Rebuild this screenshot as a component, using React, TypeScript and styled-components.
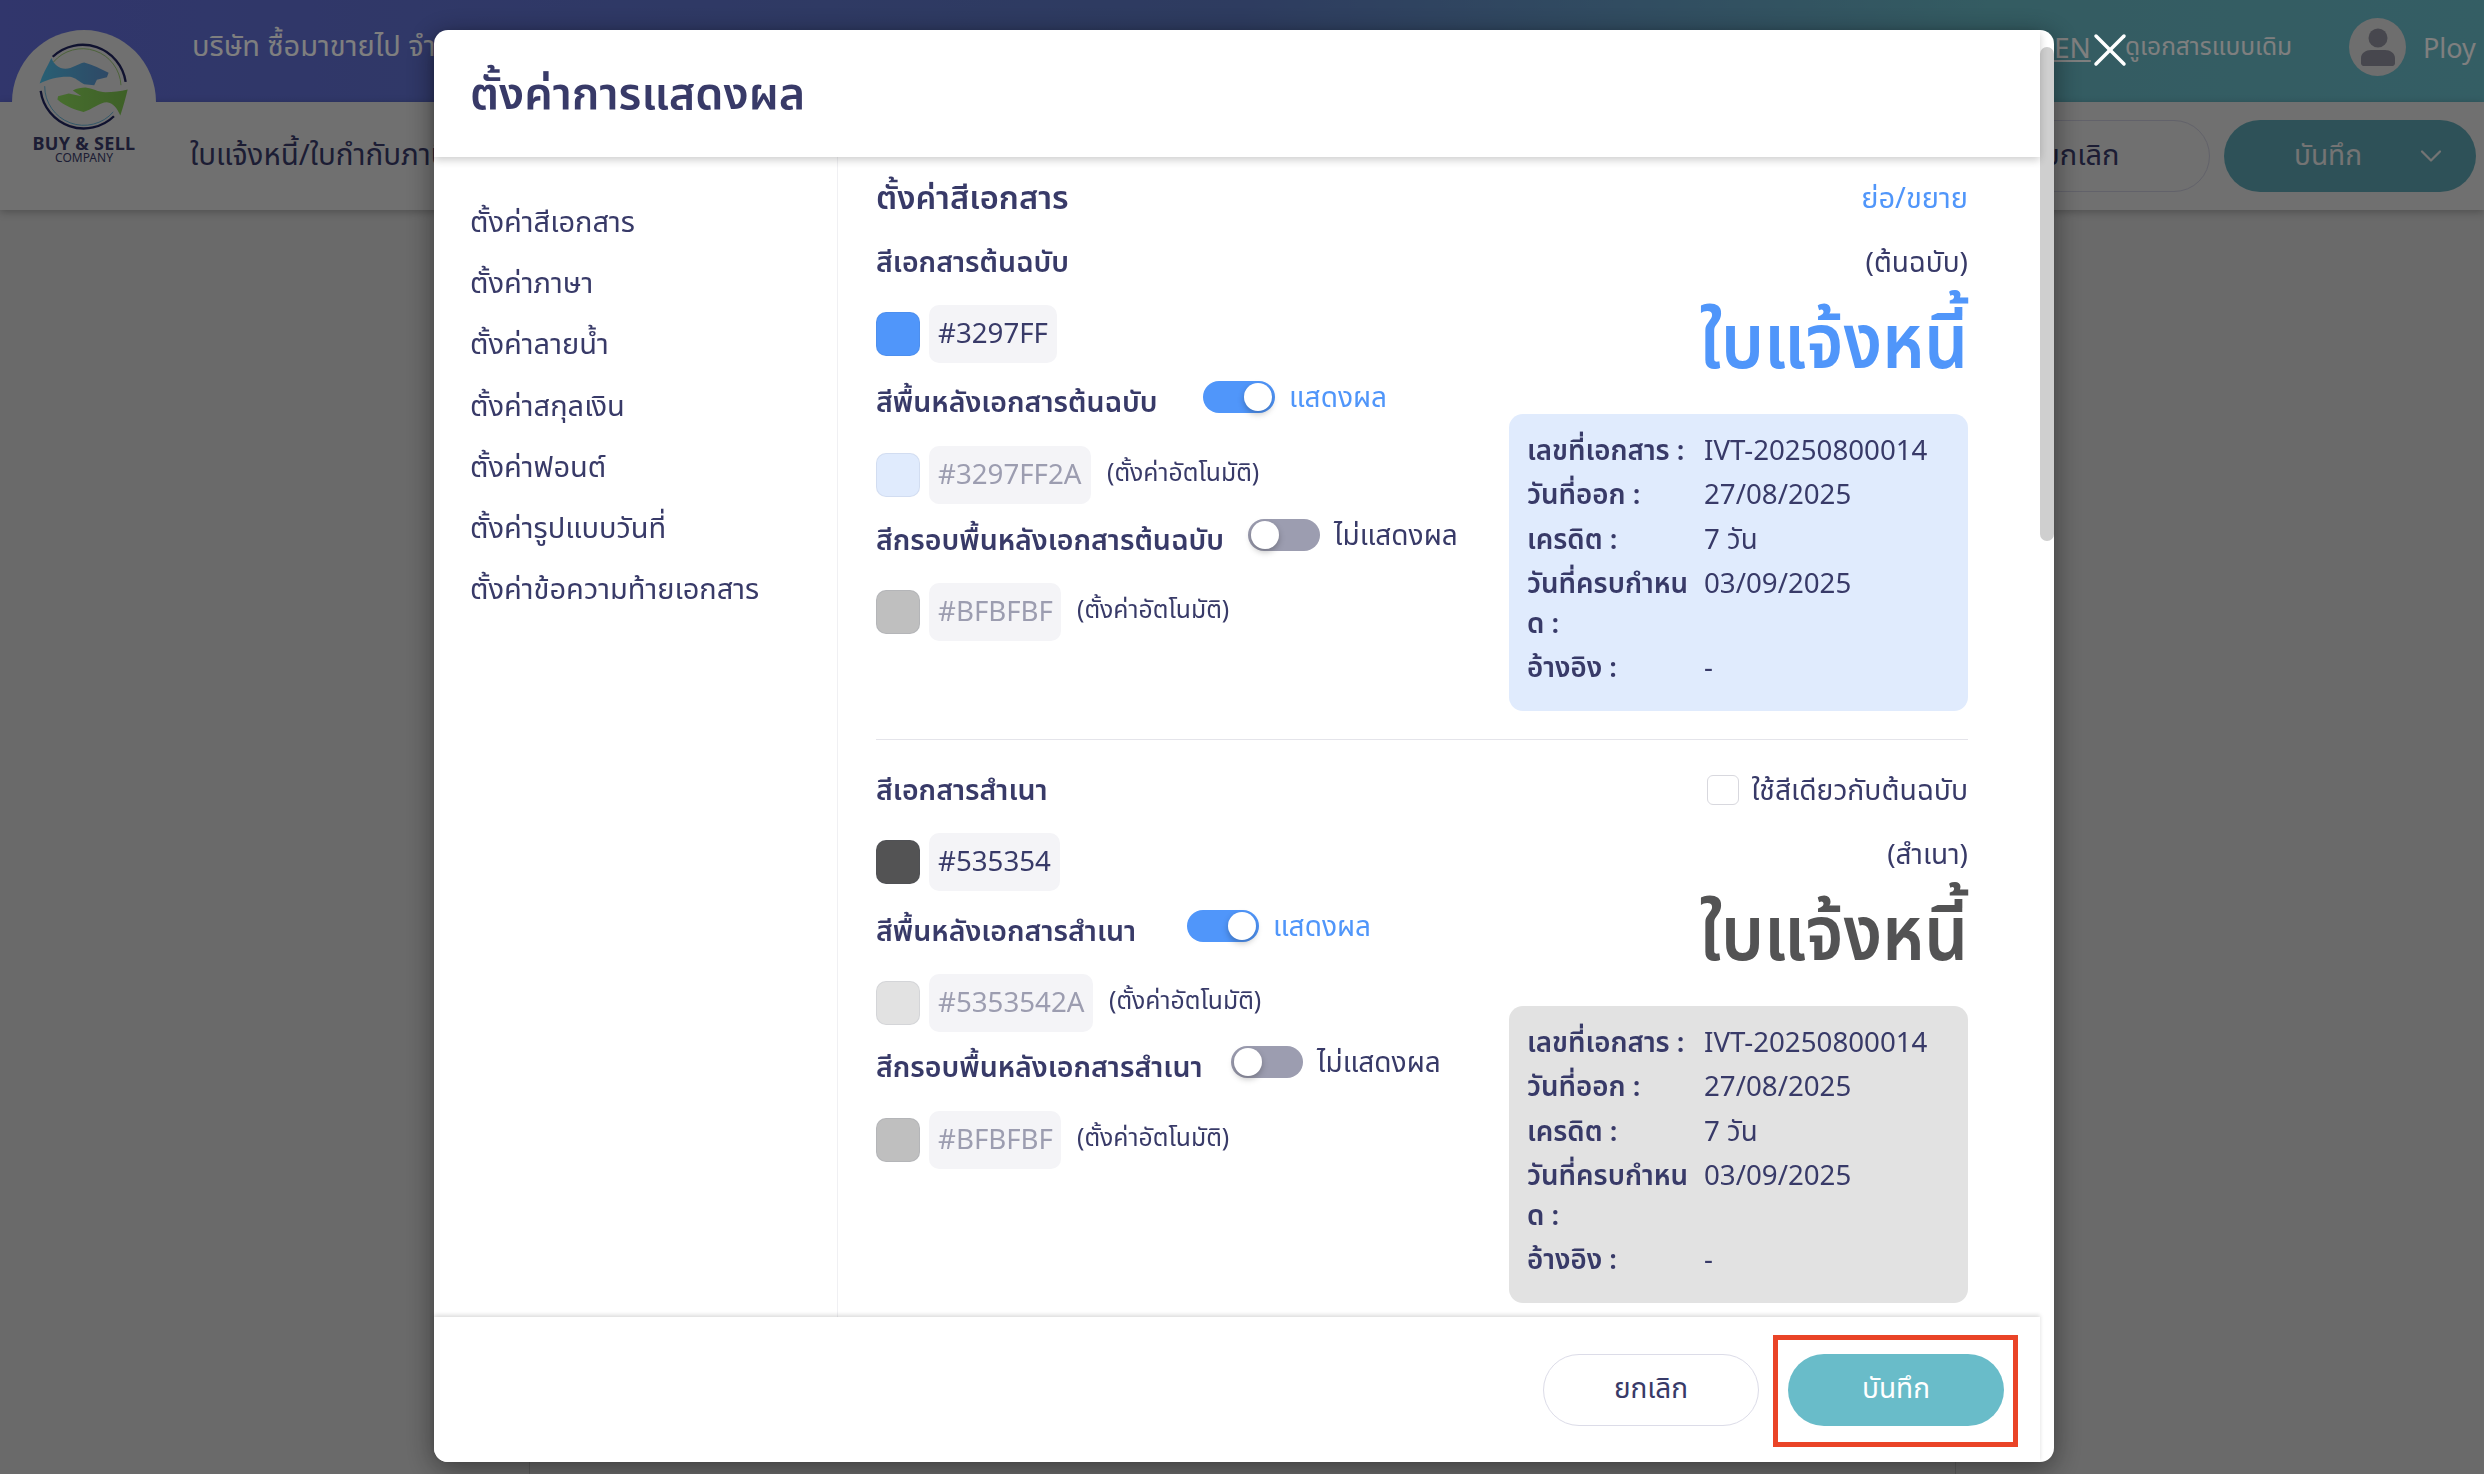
import React from "react";
import styled, { createGlobalStyle } from "styled-components";
import { ChevronDown, X } from "lucide-react";

const Global = createGlobalStyle`
  html, body { margin: 0; padding: 0; height: 100%; overflow: hidden; background: #d4d4d4; }
  * { box-sizing: border-box; }
  body, button, input { font-family: "Noto Sans", "Noto Sans Thai", "Open Sans", sans-serif; color: #383a68; }
`;

const Page = styled.div`position: relative; height: 1474px; overflow: hidden;`;
const TopBar = styled.header`
  height: 102px; padding: 0 9px 8px 192px; display: flex; align-items: center; justify-content: space-between;
  background: linear-gradient(90deg, #626cd8 0%, #5c78c0 50%, #68b8c4 80%, #69bcc9 100%);
`;
const Company = styled.div`font-size: 29px; color: #ffffff;`;
const TopRight = styled.div`display: flex; align-items: center;`;
const Lang = styled.span`font-size: 28px; color: #fff; text-decoration: underline; width: 71px;`;
const OldView = styled.span`font-size: 24.5px; color: #fff; width: 224px; white-space: nowrap;`;
const Avatar = styled.span`width: 57px; height: 58px; border-radius: 50%; background: #dcdcdc; display: flex; align-items: center; justify-content: center; margin-right: 17px;`;
const UserName = styled.span`font-size: 27px; color: #fff; width: 52px;`;
const SubBar = styled.div`
  height: 108px; padding: 18px 8px 18px 190px; display: flex; align-items: flex-start; justify-content: space-between;
  background: #e0e0e0; box-shadow: 0 2px 8px rgba(0,0,0,.25);
`;
const DocTitle = styled.div`font-size: 29.5px; height: 72px; line-height: 68px;`;
const SubActions = styled.div`display: flex; gap: 14px;`;
const GhostPill = styled.button`width: 258px; height: 72px; border-radius: 36px; border: 1px solid #c4c4d4; background: transparent; font-size: 29px;`;
const SavePill = styled.button`width: 252px; height: 72px; border-radius: 36px; border: 0; background: #5ca3b0; color: #e8e8e8; font-size: 28px; display: flex; align-items: center; padding: 0 27px 0 70px; justify-content: space-between;`;
const Sheet = styled.div`width: 1427px; height: 1300px; margin: 40px auto 0; border: 1px solid #b8b8b8;`;

const LogoWrap = styled.div`
  position: absolute; left: 12px; top: 30px; width: 144px; height: 136px;
  border-radius: 72px 72px 0 0; background: #e0e0e0;
  display: flex; flex-direction: column; align-items: center; padding-top: 10px;
`;
const LogoMain = styled.span`font-size: 18px; font-weight: 700; line-height: 18px; margin-top: 2px; color: #383a68; white-space: nowrap; letter-spacing: .3px;`;
const LogoSub = styled.span`font-size: 12px; line-height: 11px; color: #383a68;`;

const Overlay = styled.div`position: fixed; inset: 0; background: rgba(0,0,0,.5); padding: 30px 430px 12px 434px;`;
const Modal = styled.div`
  position: relative; width: 1620px; height: 1432px; background: #fff; border-radius: 14px; display: flex;
  box-shadow: 0 6px 28px rgba(0,0,0,.45);
`;
const Close = styled.button`
  position: absolute; left: 1648px; top: -8px; width: 56px; height: 56px; padding: 0; border: 0; background: none; color: #fff;
  display: flex; align-items: center; justify-content: center;
`;
const Column = styled.div`flex: 1; min-width: 0; display: flex; flex-direction: column;`;
const ModalHeader = styled.div`
  height: 127px; flex: none; padding: 2px 36px 0; display: flex; align-items: center; position: relative; z-index: 1;
  box-shadow: 0 3px 8px rgba(0,0,0,.2); font-size: 45px; font-weight: 600; border-radius: 14px 0 0 0;
`;
const Body = styled.div`flex: 1; min-height: 0; display: flex; overflow: hidden;`;
const Side = styled.nav`width: 404px; flex: none; border-right: 1px solid #f0f0f3; padding: 34px 36px 0; display: flex; flex-direction: column;`;
const SideItem = styled.a`font-size: 29px; height: 61.2px; line-height: 60px; white-space: nowrap;`;
const Main = styled.main`flex: 1; min-width: 0; padding: 17px 72px 0 38px;`;
const TitleRow = styled.div`display: flex; justify-content: space-between; align-items: center; height: 48px;`;
const SectionTitle = styled.h2`margin: 0; font-size: 32.7px; font-weight: 600; line-height: 46px; height: 48px;`;
const LinkText = styled.a`font-size: 29px; color: #5096fa; padding-top: 2px;`;
const ColorSection = styled.section<{ $top: number; $last?: boolean }>`
  display: flex; justify-content: space-between; padding-top: ${p => p.$top}px; padding-bottom: 28px;
  border-bottom: ${p => (p.$last ? "0" : "1px solid #e4e4ea")};
`;
const Left = styled.div`display: flex; flex-direction: column; flex: 1; min-width: 0;`;
const Right = styled.div`width: 459px; flex: none; display: flex; flex-direction: column;`;
const FieldLabel = styled.div<{ $w?: number; $top?: number }>`
  font-size: 28.5px; font-weight: 600; line-height: 37px; height: 40px; white-space: nowrap;
  width: ${p => (p.$w ? `${p.$w}px` : "auto")}; flex: none; margin-top: ${p => p.$top ?? 0}px;
`;
const ToggleRow = styled.div<{ $top: number }>`display: flex; align-items: flex-start; margin-top: ${p => p.$top}px;`;
const ToggleGroup = styled.div`display: flex; align-items: flex-start; margin-top: -2px;`;
const Toggle = styled.span<{ $on: boolean }>`
  width: 72px; height: 32px; border-radius: 16px; flex: none; display: flex; padding: 2px 3px;
  justify-content: ${p => (p.$on ? "flex-end" : "flex-start")};
  background: ${p => (p.$on ? "#5096fa" : "#9c9db0")};
`;
const Knob = styled.span`width: 28px; height: 28px; border-radius: 50%; background: #fff; box-shadow: 0 3px 6px rgba(0,0,0,.25);`;
const ToggleText = styled.span<{ $on: boolean }>`
  margin-left: 14px; font-size: 28px; line-height: 31px; white-space: nowrap; color: ${p => (p.$on ? "#5096fa" : "#383a68")};
`;
const ColorRow = styled.div<{ $top: number }>`display: flex; align-items: center; margin-top: ${p => p.$top}px; height: 58px;`;
const Swatch = styled.span<{ $c: string }>`width: 44px; height: 44px; flex: none; border-radius: 10px; background: ${p => p.$c}; border: 1px solid rgba(56,58,104,.08);`;
const HexBox = styled.span<{ $w: number; $auto?: boolean }>`
  margin-left: 9px; width: ${p => p.$w}px; height: 58px; flex: none; border-radius: 10px; background: #f4f4f7; padding: 0 0 4px 9px;
  display: flex; align-items: center; font-size: 27.7px; white-space: nowrap; color: ${p => (p.$auto ? "#9c9db0" : "#383a68")};
`;
const AutoNote = styled.span`margin-left: 16px; font-size: 24.7px; white-space: nowrap; padding-bottom: 4px;`;
const CheckRow = styled.div`display: flex; justify-content: flex-end; align-items: center; height: 38px; gap: 13px; font-size: 28.3px; white-space: nowrap; margin-bottom: 26px;`;
const CheckBox = styled.span`width: 32px; height: 30px; border-radius: 6px; border: 1px solid #d8d8de; background: #fff;`;
const CheckText = styled.span`padding-top: 2px;`;
const CopyType = styled.div`text-align: right; font-size: 28px; line-height: 36px; height: 40px;`;
const DocName = styled.div<{ $c: string }>`
  text-align: right; font-size: 76px; font-weight: 600; line-height: 100px; height: 131px; padding-top: 6px; color: ${p => p.$c}; white-space: nowrap;
  transform: scaleX(.91); transform-origin: right center;
`;
const InfoBox = styled.div<{ $c: string }>`
  background: ${p => p.$c}; border-radius: 14px; padding: 15px 18px 20px; height: 297px;
  display: grid; grid-template-columns: 177px 1fr; grid-auto-rows: min-content; row-gap: 4.3px; font-size: 27.7px; line-height: 40px;
`;
const InfoLabel = styled.div`font-weight: 600; white-space: nowrap;`;
const InfoValue = styled.div`white-space: nowrap;`;
const Footer = styled.footer`
  height: 145px; flex: none; display: flex; justify-content: flex-end; align-items: center; gap: 29px; padding: 0 36px 0 0;
  box-shadow: 0 -2px 4px rgba(0,0,0,.14); position: relative; z-index: 1; background: #fff; border-radius: 0 0 0 14px;
`;
const Cancel = styled.button`width: 216px; height: 72px; border-radius: 36px; border: 1px solid #dcdce8; background: #fff; font-size: 28px; color: #383a68;`;
const HighlightBox = styled.div`
  position: absolute; right: 22px; top: 18px; width: 245px; height: 112px; border: 5px solid #ea4427; pointer-events: none;
`;
const Save = styled.button`width: 216px; height: 72px; border-radius: 36px; border: 0; background: #69bcc9; color: #fff; font-size: 28px;`;
const Track = styled.div`width: 14px; flex: none; padding-top: 17px;`;
const Thumb = styled.div`height: 494px; background: #cfcfcf; border-radius: 7px;`;

const Logo = () => (
  <svg width="92" height="92" viewBox="60 30 275 275" fill="none">
    <defs>
      <linearGradient id="lgBlue" x1="0" x2="1" y1="0" y2="0">
        <stop offset="0" stopColor="#50bfe8" />
        <stop offset="1" stopColor="#5e92cc" />
      </linearGradient>
      <linearGradient id="lgGreen" x1="0" x2="1" y1="0" y2="0">
        <stop offset="0" stopColor="#8edc5c" />
        <stop offset="1" stopColor="#7cc04e" />
      </linearGradient>
    </defs>
    <path d="M104 80A130 130 0 0 1 322 155" stroke="#20255f" strokeWidth="7" />
    <path d="M106 96A115 115 0 0 1 308 165" stroke="#8cc060" strokeWidth="2.5" />
    <path d="M68 182A130 130 0 0 0 287 258" stroke="#20255f" strokeWidth="7" />
    <path d="M80 168A117 117 0 0 0 285 245" stroke="#50a8d0" strokeWidth="2.5" />
    <path
      d="M65 160C72 135 88 110 100 84C108 104 122 116 142 116C162 116 180 100 198 97C222 104 250 116 271 128L266 141L236 149L228 165L198 162C184 156 172 142 156 140C126 138 92 146 65 160Z"
      fill="url(#lgBlue)"
    />
    <path
      d="M328 178C322 204 314 232 306 256C296 232 284 218 266 216C244 216 222 238 196 245C170 240 138 226 118 208L120 198L152 190L190 198L164 181C176 174 190 172 202 172C222 174 240 186 262 186C284 186 306 184 328 178Z"
      fill="url(#lgGreen)"
    />
  </svg>
);

const Person = () => (
  <svg width="34" height="38" viewBox="0 0 34 38" fill="#8e8e9c">
    <circle cx="17" cy="10" r="9.5" />
    <path d="M2 38a3 3 0 0 1-2-3v-5c0-5 5-8 10-8h14c5 0 10 3 10 8v5a3 3 0 0 1-2 3Z" />
  </svg>
);

type Row = [string, React.ReactNode, string];
const info: Row[] = [
  ["เลขที่เอกสาร :", "IVT-20250800014", "a"],
  ["วันที่ออก :", "27/08/2025", "b"],
  ["เครดิต :", "7 วัน", "c"],
  ["วันที่ครบกำหน\nด :", "03/09/2025", "d"],
  ["อ้างอิง :", "-", "e"],
];

const Preview = ({ label, color, bg }: { label: string; color: string; bg: string }) => (
  <>
    <CopyType>{label}</CopyType>
    <DocName $c={color}>ใบแจ้งหนี้</DocName>
    <InfoBox $c={bg}>
      {info.map(([k, v, id]) => (
        <React.Fragment key={id}>
          <InfoLabel>
            {k.split("\n").map(t => (
              <div key={t}>{t}</div>
            ))}
          </InfoLabel>
          <InfoValue>{v}</InfoValue>
        </React.Fragment>
      ))}
    </InfoBox>
  </>
);

const menu = ["ตั้งค่าสีเอกสาร", "ตั้งค่าภาษา", "ตั้งค่าลายน้ำ", "ตั้งค่าสกุลเงิน", "ตั้งค่าฟอนต์", "ตั้งค่ารูปแบบวันที่", "ตั้งค่าข้อความท้ายเอกสาร"];

export default function App() {
  return (
    <Page>
      <Global />
      <TopBar>
        <Company>บริษัท ซื้อมาขายไป จำกัด</Company>
        <TopRight>
          <Lang>EN</Lang>
          <OldView>ดูเอกสารแบบเดิม</OldView>
          <Avatar><Person /></Avatar>
          <UserName>Ploy</UserName>
        </TopRight>
      </TopBar>
      <SubBar>
        <DocTitle>ใบแจ้งหนี้/ใบกำกับภาษี</DocTitle>
        <SubActions>
          <GhostPill>ยกเลิก</GhostPill>
          <SavePill>บันทึก <ChevronDown size={36} strokeWidth={1.5} /></SavePill>
        </SubActions>
      </SubBar>
      <Sheet />
      <LogoWrap>
        <Logo />
        <LogoMain>BUY &amp; SELL</LogoMain>
        <LogoSub>COMPANY</LogoSub>
      </LogoWrap>
      <Overlay>
        <Modal>
          <Column>
            <ModalHeader>ตั้งค่าการแสดงผล</ModalHeader>
            <Body>
              <Side>
                {menu.map(m => <SideItem key={m}>{m}</SideItem>)}
              </Side>
              <Main>
                <TitleRow>
                  <SectionTitle>ตั้งค่าสีเอกสาร</SectionTitle>
                  <LinkText>ย่อ/ขยาย</LinkText>
                </TitleRow>
                <ColorSection $top={21}>
                  <Left>
                    <FieldLabel>สีเอกสารต้นฉบับ</FieldLabel>
                    <ColorRow $top={22}>
                      <Swatch $c="#5096fa" />
                      <HexBox $w={128}>#3297FF</HexBox>
                    </ColorRow>
                    <ToggleRow $top={20}>
                      <FieldLabel $w={327}>สีพื้นหลังเอกสารต้นฉบับ</FieldLabel>
                      <ToggleGroup>
                        <Toggle $on><Knob /></Toggle>
                        <ToggleText $on>แสดงผล</ToggleText>
                      </ToggleGroup>
                    </ToggleRow>
                    <ColorRow $top={23}>
                      <Swatch $c="#e0ebfd" />
                      <HexBox $w={162} $auto>#3297FF2A</HexBox>
                      <AutoNote>(ตั้งค่าอัตโนมัติ)</AutoNote>
                    </ColorRow>
                    <ToggleRow $top={17}>
                      <FieldLabel $w={372}>สีกรอบพื้นหลังเอกสารต้นฉบับ</FieldLabel>
                      <ToggleGroup>
                        <Toggle $on={false}><Knob /></Toggle>
                        <ToggleText $on={false}>ไม่แสดงผล</ToggleText>
                      </ToggleGroup>
                    </ToggleRow>
                    <ColorRow $top={22}>
                      <Swatch $c="#bfbfbf" />
                      <HexBox $w={132} $auto>#BFBFBF</HexBox>
                      <AutoNote>(ตั้งค่าอัตโนมัติ)</AutoNote>
                    </ColorRow>
                  </Left>
                  <Right>
                    <Preview label="(ต้นฉบับ)" color="#5096fa" bg="#e0ebfd" />
                  </Right>
                </ColorSection>
                <ColorSection $top={31} $last>
                  <Left>
                    <FieldLabel>สีเอกสารสำเนา</FieldLabel>
                    <ColorRow $top={22}>
                      <Swatch $c="#535354" />
                      <HexBox $w={131}>#535354</HexBox>
                    </ColorRow>
                    <ToggleRow $top={21}>
                      <FieldLabel $w={311}>สีพื้นหลังเอกสารสำเนา</FieldLabel>
                      <ToggleGroup>
                        <Toggle $on><Knob /></Toggle>
                        <ToggleText $on>แสดงผล</ToggleText>
                      </ToggleGroup>
                    </ToggleRow>
                    <ColorRow $top={22}>
                      <Swatch $c="#e2e2e2" />
                      <HexBox $w={164} $auto>#5353542A</HexBox>
                      <AutoNote>(ตั้งค่าอัตโนมัติ)</AutoNote>
                    </ColorRow>
                    <ToggleRow $top={16}>
                      <FieldLabel $w={355}>สีกรอบพื้นหลังเอกสารสำเนา</FieldLabel>
                      <ToggleGroup>
                        <Toggle $on={false}><Knob /></Toggle>
                        <ToggleText $on={false}>ไม่แสดงผล</ToggleText>
                      </ToggleGroup>
                    </ToggleRow>
                    <ColorRow $top={23}>
                      <Swatch $c="#bfbfbf" />
                      <HexBox $w={132} $auto>#BFBFBF</HexBox>
                      <AutoNote>(ตั้งค่าอัตโนมัติ)</AutoNote>
                    </ColorRow>
                  </Left>
                  <Right>
                    <CheckRow><CheckBox /><CheckText>ใช้สีเดียวกับต้นฉบับ</CheckText></CheckRow>
                    <Preview label="(สำเนา)" color="#535354" bg="#e2e2e2" />
                  </Right>
                </ColorSection>
              </Main>
            </Body>
            <Footer>
              <Cancel>ยกเลิก</Cancel>
              <Save>บันทึก</Save>
              <HighlightBox />
            </Footer>
          </Column>
          <Track><Thumb /></Track>
          <Close aria-label="close"><X size={56} strokeWidth={1.5} /></Close>
        </Modal>
      </Overlay>
    </Page>
  );
}
